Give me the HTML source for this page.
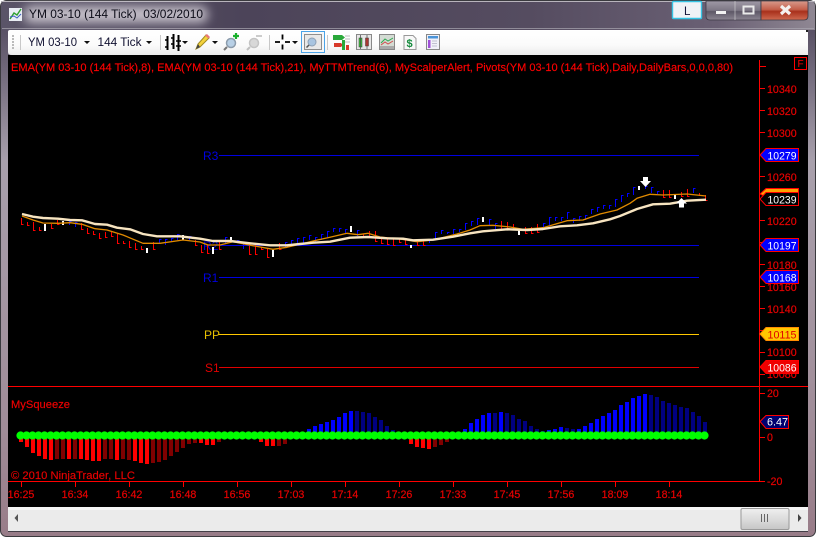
<!DOCTYPE html>
<html><head><meta charset="utf-8"><title>YM 03-10</title>
<style>
html,body{margin:0;padding:0;background:#fff;width:816px;height:539px;overflow:hidden}
svg{display:block;font-family:"Liberation Sans",sans-serif}
.ax{fill:#e60000;stroke:#e60000;stroke-width:.2px;font-size:10.67px}
</style></head><body>
<svg width="816" height="539" viewBox="0 0 816 539" xmlns="http://www.w3.org/2000/svg">
<defs>
<linearGradient id="fr" x1="0" y1="0" x2="0" y2="1"><stop offset="0" stop-color="#4a4357"/><stop offset=".06" stop-color="#5a5266"/><stop offset=".3" stop-color="#a8a0ac"/><stop offset=".8" stop-color="#a08c98"/><stop offset="1" stop-color="#987c88"/></linearGradient>
<linearGradient id="tt" x1="0" y1="0" x2="1" y2="0"><stop offset="0" stop-color="#5a5468"/><stop offset=".3" stop-color="#4c4459"/><stop offset=".65" stop-color="#554c60"/><stop offset=".88" stop-color="#6a6074"/><stop offset="1" stop-color="#8f8793"/></linearGradient>
<linearGradient id="tb" x1="0" y1="0" x2="0" y2="1"><stop offset="0" stop-color="#fff"/><stop offset=".6" stop-color="#fbfbfb"/><stop offset="1" stop-color="#ececec"/></linearGradient>
<linearGradient id="btn" x1="0" y1="0" x2="0" y2="1"><stop offset="0" stop-color="#a09aa6"/><stop offset=".5" stop-color="#7c7684"/><stop offset=".55" stop-color="#5d5766"/><stop offset="1" stop-color="#8b8592"/></linearGradient>
<linearGradient id="cl" x1="0" y1="0" x2="0" y2="1"><stop offset="0" stop-color="#d89a8c"/><stop offset=".45" stop-color="#c45f4a"/><stop offset=".55" stop-color="#a8301c"/><stop offset="1" stop-color="#cf6a50"/></linearGradient>
<linearGradient id="th" x1="0" y1="0" x2="0" y2="1"><stop offset="0" stop-color="#efefef"/><stop offset=".5" stop-color="#dcdcdc"/><stop offset="1" stop-color="#c6c6c6"/></linearGradient>
<filter id="gl" x="-20%" y="-80%" width="140%" height="260%"><feGaussianBlur stdDeviation="5"/></filter>
</defs>

<!-- window frame -->
<rect x="0" y="0" width="816" height="539" fill="#fff"/>
<rect x=".5" y=".5" width="815" height="536" rx="6" fill="url(#fr)" stroke="#3a3a3e"/>
<path d="M1 30V6Q1 1 6 1H810Q815 1 815 6V30Z" fill="url(#tt)"/>
<rect x="1" y="1" width="814" height="1" fill="#b8b4bc"/>
<rect x="2" y="28" width="812" height="1" fill="#aaa6b0" opacity=".7"/>

<!-- title -->
<rect x="24" y="6" width="184" height="17" rx="8" fill="#e8e4ea" opacity=".75" filter="url(#gl)"/>
<rect x="9" y="8" width="13" height="13" fill="#e9edf4"/>
<path d="M10 19L14 13L17 15L21 9" fill="none" stroke="#2fa02f" stroke-width="1.4"/>
<path d="M10 17L14 16L17 18L21 14" fill="none" stroke="#3a5fc0" stroke-width="1"/>
<text x="29" y="18" font-size="12" fill="#0c0c18" textLength="174" lengthAdjust="spacingAndGlyphs" xml:space="preserve">YM 03-10 (144 Tick)  03/02/2010</text>

<!-- window buttons -->
<rect x="672.5" y="1.5" width="29" height="17" rx="1" fill="#f0f2f6" stroke="#36c4e4" stroke-width="1.4"/>
<text x="684" y="15" font-size="11.5" fill="#14143a">L</text>
<path d="M706 1H761V20H710Q706 20 706 16Z" fill="url(#btn)" stroke="#3e3a46" stroke-width=".8"/>
<path d="M761 1H808V16Q808 20 804 20H761Z" fill="url(#cl)" stroke="#3e3a46" stroke-width=".8"/>
<path d="M735 1V20" stroke="#ddd" stroke-width=".8" opacity=".7"/>
<rect x="716" y="11" width="10" height="3" fill="#f2f2f2"/>
<rect x="743.5" y="6.5" width="10" height="7" fill="none" stroke="#eaeaea" stroke-width="2"/>
<path d="M781 6L790 14M790 6L781 14" stroke="#f4f0ee" stroke-width="3.2"/>

<!-- toolbar -->
<path d="M8 32Q8 30 10 30H808V55H12Q8 55 8 52Z" fill="url(#tb)"/>
<rect x="806" y="30" width="2" height="2" fill="#222"/>
<path d="M12 36h2M12 39h2M12 42h2M12 45h2M12 48h2" stroke="#bbb" stroke-width="2"/>
<path d="M20.5 35V50M160.5 35V50M269.5 35V50M327.5 35V50" stroke="#c8c8c8"/>
<text x="28" y="46" font-size="11.5" fill="#101030" textLength="49" lengthAdjust="spacingAndGlyphs">YM 03-10</text>
<text x="97.5" y="46" font-size="11.5" fill="#101030" textLength="44" lengthAdjust="spacingAndGlyphs">144 Tick</text>
<path d="M84 41h6l-3 3zM146 41h6l-3 3zM182 41h6l-3 3zM212 41h6l-3 3zM292 41h6l-3 3z" fill="#111"/>
<!-- style icon -->
<path d="M167.5 36V50M173.5 34V49M178.5 35V51" stroke="#000" stroke-width="2"/>
<path d="M165 40h3M165 47h3M171 38h3M171 44h3M176 41h5M176 46h5" stroke="#000" stroke-width="1.6"/>
<!-- pencil -->
<path d="M196 49L198 44L206 35L209 38L200 47Z" fill="#f4d23c" stroke="#a08a20"/>
<path d="M205 35.5L207 34L210 37L208.5 38.5Z" fill="#e87878"/>
<path d="M196 49L198 44L200 47Z" fill="#444"/>
<!-- zoom in / out -->
<circle cx="231" cy="43" r="4.5" fill="#b8d0e6" stroke="#8c9cac" stroke-width="1.5"/>
<path d="M227 47L224 50" stroke="#777" stroke-width="2"/>
<path d="M233 36h6M236 33v6" stroke="#1ab02c" stroke-width="2.2"/>
<circle cx="254" cy="43" r="4.5" fill="#d8d8d8" stroke="#c4c4c4" stroke-width="1.5"/>
<path d="M250 47L247 50" stroke="#c0c0c0" stroke-width="2"/>
<path d="M256 36h6" stroke="#ccc" stroke-width="2"/>
<!-- crosshair -->
<path d="M275 42h5M285 42h5M282.5 34.5v5M282.5 44.5v5" stroke="#000" stroke-width="1.8"/>
<!-- selected zoom -->
<rect x="301.5" y="31.5" width="23" height="21" fill="#f7f7f7" stroke="#4aa3e8"/>
<rect x="304.5" y="34.5" width="17" height="15" fill="#e8e8e8" stroke="#8e8e8e"/>
<circle cx="312" cy="42" r="4" fill="#a8c4e0" stroke="#8ea0b4"/>
<path d="M309 45L306.5 47.5" stroke="#555" stroke-width="1.5"/>
<!-- chart icons -->
<path d="M333 35h9l3 2.5-3 2.5h-9z" fill="#2aa83a"/>
<path d="M334 43h7l2 2-2 2h-7z" fill="#d8392a"/>
<rect x="342" y="40" width="3" height="10" fill="#2aa83a"/><rect x="346" y="45" width="3" height="5" fill="#d8392a"/>
<path d="M345 36h5M345 39h5M345 42h5" stroke="#bbb"/>
<rect x="356.5" y="34.5" width="15" height="15" fill="#e6e6e6" stroke="#888"/>
<rect x="359" y="38" width="3" height="9" fill="#3cc83c" stroke="#333" stroke-width=".5"/><rect x="365.5" y="38" width="3" height="8" fill="#e03028" stroke="#333" stroke-width=".5"/>
<path d="M360.5 35v14M367 35v14" stroke="#444" stroke-width=".7"/>
<rect x="379.5" y="34.5" width="15" height="15" fill="#d4dcd4" stroke="#888"/>
<path d="M381 43L385 39L388 41L393 38" fill="none" stroke="#30a850"/><path d="M381 45L385 42L388 44L393 41" fill="none" stroke="#d05050"/>
<rect x="380" y="46" width="14" height="3" fill="#aaa"/>
<path d="M404 35.5h9l3 3v11h-12z" fill="#f8f8f8" stroke="#999"/>
<text x="406.5" y="47" font-size="11" font-weight="bold" fill="#148a3c">$</text>
<rect x="426.5" y="34.5" width="13" height="15" fill="#f0f0f8" stroke="#888"/>
<rect x="428" y="36" width="10" height="2.5" fill="#4a94d8"/>
<rect x="428" y="40" width="2.5" height="8" fill="#a050d8"/>
<path d="M432 41h5M432 43.5h5M432 46h5" stroke="#c0c0d0"/>

<!-- chart -->
<rect x="8" y="55" width="800" height="452" fill="#000"/>
<text x="11" y="71" font-size="11" fill="#ff0000" stroke="#ff0000" stroke-width=".15" textLength="722" lengthAdjust="spacingAndGlyphs">EMA(YM 03-10 (144 Tick),8), EMA(YM 03-10 (144 Tick),21), MyTTMTrend(6), MyScalperAlert, Pivots(YM 03-10 (144 Tick),Daily,DailyBars,0,0,0,80)</text>
<rect x="794.5" y="57.5" width="12" height="12" fill="none" stroke="#f00"/>
<text x="797.5" y="67" font-size="10" fill="#f00">F</text>

<!-- pivots -->
<g stroke-width="1">
<path d="M219 155.5H699M219 245.5H699M219 277.5H699" stroke="#0000e0"/>
<path d="M219 334.5H699" stroke="#ffc800"/>
<path d="M219 367.5H699" stroke="#e00000"/>
</g>
<g font-size="12">
<text x="203" y="160" fill="#0000e0">R3</text>
<text x="203" y="250" fill="#0000e0">R2</text>
<text x="203" y="282" fill="#0000e0">R1</text>
<text x="204" y="339" fill="#e8c000">PP</text>
<text x="205" y="372" fill="#e00000">S1</text>
</g>

<!-- price bars -->
<g fill="none" stroke-width="1">
<path stroke="#f00" d="M21.5 218V224.5h2M27.5 222V225.5h2M33.5 222V230.5h2M39.5 227V230.5h2M51.5 224V228.5h2M57.5 220V224.5h2M81.5 223V229.5h2M87.5 228V233.5h2M93.5 231V234.5h2M99.5 233V238.5h2M105.5 232V237.5h2M111.5 232V236.5h2M117.5 234V243.5h2M123.5 241V243.5h2M129.5 241V247.5h2M135.5 243V249.5h2M141.5 246V249.5h2M153.5 242V249.5h2M195.5 240V245.5h2M201.5 245V252.5h2M207.5 245V253.5h2M219.5 242V249.5h2M249.5 246V254.5h2M255.5 245V254.5h2M261.5 247V249.5h2M267.5 248V257.5h2M279.5 243V249.5h2M363.5 234V237.5h2M369.5 231V237.5h2M375.5 231V241.5h2M381.5 239V243.5h2M387.5 239V244.5h2M393.5 239V245.5h2M399.5 239V242.5h2M405.5 240V244.5h2M417.5 242V245.5h2M423.5 240V245.5h2M501.5 221V229.5h2M507.5 222V228.5h2M513.5 224V229.5h2M525.5 227V233.5h2M531.5 227V233.5h2M537.5 224V232.5h2M663.5 190V197.5h2M669.5 190V197.5h2M681.5 192V196.5h2M687.5 189V196.5h2M699.5 193V195.5h2M705.5 195V200.5h2"/>
<path stroke="#00f" d="M69.5 225V221.5h2M75.5 227V222.5h2M159.5 243V239.5h2M165.5 245V239.5h2M171.5 242V238.5h2M177.5 240V234.5h2M189.5 240V236.5h2M225.5 243V237.5h2M237.5 243V240.5h2M243.5 249V242.5h2M285.5 247V242.5h2M291.5 245V240.5h2M297.5 243V238.5h2M303.5 243V237.5h2M309.5 240V235.5h2M315.5 242V237.5h2M321.5 240V234.5h2M327.5 238V231.5h2M333.5 232V228.5h2M339.5 232V228.5h2M345.5 234V229.5h2M357.5 236V230.5h2M429.5 243V240.5h2M435.5 239V232.5h2M441.5 234V230.5h2M447.5 234V232.5h2M453.5 234V229.5h2M459.5 232V229.5h2M465.5 230V223.5h2M471.5 226V221.5h2M477.5 225V218.5h2M489.5 225V219.5h2M495.5 229V223.5h2M543.5 228V223.5h2M549.5 225V217.5h2M555.5 221V217.5h2M561.5 221V217.5h2M567.5 219V212.5h2M573.5 223V218.5h2M579.5 221V216.5h2M585.5 220V215.5h2M591.5 214V209.5h2M597.5 212V207.5h2M603.5 209V205.5h2M609.5 209V205.5h2M615.5 207V199.5h2M621.5 202V195.5h2M627.5 197V193.5h2M633.5 195V187.5h2M645.5 189V186.5h2M651.5 193V187.5h2M657.5 194V191.5h2M693.5 193V188.5h2"/>
<path stroke="#fff" stroke-width="2" d="M45 224V231M63 221V225M147 248V253M183 235V240M213 247V254M231 237V242M273 250V257M351 226V232M411 245V248M483 217V222M519 230V235M639 186V190M675 195V199"/>
</g>

<!-- EMAs -->
<polyline fill="none" stroke="#e08a00" stroke-width="1.3" stroke-linejoin="round" points="22,216 33,220 43,223 58,223.3 70,222.7 82,224.3 95,228.7 107,230 123,235 143,243.3 160,243.3 183,240 200,242 208,245 220,245 233,241.7 253,245.7 273,249.3 287,247.3 300,244.3 313,241 330,237.3 347,233.3 358,234.7 368,233.3 380,237 400,239 417,241.7 433,240 457,234 470,230 480,225.7 493,225.3 510,227 523,229.3 543,227.7 567,220.7 583,220 600,214 617,210 630,203.3 637,198.3 650,194.3 663,195 687,194 706,196"/>
<polyline fill="none" stroke="#f7e4c0" stroke-width="2.4" stroke-linejoin="round" points="22,214 33,216.7 43,218 58,218.7 70,220 82,220.3 95,224 107,224.7 117,227.7 130,229.3 143,234 157,236.3 180,236.3 200,238.7 213,241 230,241 250,243.3 270,245.3 287,245.3 300,244 313,242.7 330,241.7 350,237.7 368,237 387,238.3 403,238.7 413,240.3 433,239.7 453,236.7 470,233.3 483,231.3 507,229.3 527,230 543,229 560,226.3 577,225.3 593,223.3 610,219.3 620,216 637,209 653,204.3 670,203.7 687,200.7 706,199.7"/>

<!-- alert arrows -->
<path d="M643 177h5v4h3l-5.5 6-5.500-6h3z" fill="#fff"/>
<path d="M681.5 198l5.5 5.5h-3v4h-5v-4h-3z" fill="#fff"/>

<!-- axes -->
<g stroke="#f00">
<path d="M8 386.5H808M8 481.5H765M759.5 60V481.5"/>
<path d="M759 66.5h7M759 88.5h6M759 110.5h6M759 132.5h6M759 154.5h6M759 176.5h6M759 198.5h6M759 220.5h6M759 242.5h6M759 264.5h6M759 286.5h6M759 308.5h6M759 330.5h6M759 352.5h6M759 374.5h6M759 393.5h6M759 437.5h6"/>
<path d="M21.5 482V487M75.5 482V487M129.5 482V487M183.5 482V487M237.5 482V487M291.5 482V487M345.5 482V487M399.5 482V487M453.5 482V487M507.5 482V487M561.5 482V487M615.5 482V487M669.5 482V487"/>
</g>
<g class="ax">
<text x="767" y="93">10340</text><text x="767" y="115">10320</text><text x="767" y="137">10300</text><text x="767" y="159">10280</text><text x="767" y="181">10260</text><text x="767" y="203">10240</text><text x="767" y="225">10220</text><text x="767" y="247">10200</text><text x="767" y="269">10180</text><text x="767" y="291">10160</text><text x="767" y="313">10140</text><text x="767" y="335">10120</text><text x="767" y="356">10100</text><text x="767" y="378">10080</text>
<text x="767" y="397">20</text><text x="767" y="441">0</text><text x="767" y="485">-20</text>
</g>

<!-- price tags -->
<g font-size="11" stroke-width="1">
<polygon points="760,194 766,188.5 798.5,188.5 798.5,197 766,197" fill="#ffa000" stroke="#f00"/>
<polygon points="760,155 766,148.5 798.5,148.5 798.5,161.5 766,161.5" fill="#0000ff" stroke="#f00"/>
<text x="767.5" y="159.5" fill="#fff" textLength="29" lengthAdjust="spacingAndGlyphs">10279</text>
<polygon points="760,199 766,192.5 798.5,192.5 798.5,205.5 766,205.5" fill="#000" stroke="#f00"/>
<text x="767.5" y="203.5" fill="#fff" textLength="29" lengthAdjust="spacingAndGlyphs">10239</text>
<polygon points="760,245 766,238.5 798.5,238.5 798.5,251.5 766,251.5" fill="#0000ff" stroke="#f00"/>
<text x="767.5" y="249.5" fill="#fff" textLength="29" lengthAdjust="spacingAndGlyphs">10197</text>
<polygon points="760,277 766,270.5 798.5,270.5 798.5,283.5 766,283.5" fill="#0000ff" stroke="#f00"/>
<text x="767.5" y="281.5" fill="#fff" textLength="29" lengthAdjust="spacingAndGlyphs">10168</text>
<polygon points="760,334 766,327.5 798.5,327.5 798.5,340.5 766,340.5" fill="#ffc800" stroke="#ff8c00"/>
<text x="767.5" y="338.5" fill="#e00000" textLength="29" lengthAdjust="spacingAndGlyphs">10115</text>
<polygon points="760,367 766,360.5 798.5,360.5 798.5,373.5 766,373.5" fill="#f00000" stroke="#f00"/>
<text x="767.5" y="371.5" fill="#fff" textLength="29" lengthAdjust="spacingAndGlyphs">10086</text>
<polygon points="760,421.5 766,415.5 788.5,415.5 788.5,428.5 766,428.5" fill="#000070" stroke="#f00"/>
<text x="767" y="425.5" fill="#fff" textLength="21" lengthAdjust="spacingAndGlyphs">6.47</text>
</g>

<!-- squeeze histogram -->
<g fill="none" stroke-width="4">
<path stroke="#ff0000" d="M21 436V442M27 436V447M33 436V453M39 436V456M45 436V459M51 436V460M69 436V459M81 436V459M87 436V460M93 436V461M99 436V461M117 436V460M135 436V461M141 436V463M147 436V464M201 436V443M207 436V445M213 436V445M261 436V442M267 436V446M273 436V446M411 436V444M417 436V447M423 436V448M429 436V449"/>
<path stroke="#800000" d="M57 436V459M63 436V459M75 436V459M105 436V459M111 436V459M123 436V459M129 436V460M153 436V463M159 436V462M165 436V460M171 436V456M177 436V452M183 436V448M189 436V444M195 436V443M219 436V442M279 436V446M285 436V444M435 436V447M441 436V445M447 436V442"/>
<path stroke="#0000ff" d="M309 436V429M315 436V426M321 436V424M327 436V422M333 436V420M339 436V417M345 436V413M351 436V411M465 436V429M471 436V423M477 436V419M483 436V415M489 436V413M501 436V412M549 436V430M555 436V429M561 436V427M579 436V429M585 436V426M591 436V423M597 436V419M603 436V416M609 436V413M615 436V410M621 436V405M627 436V402M633 436V398M639 436V396M645 436V394"/>
<path stroke="#000080" d="M357 436V411M363 436V412M369 436V413M375 436V417M381 436V420M387 436V426M393 436V430M495 436V413M507 436V413M513 436V415M519 436V419M525 436V421M531 436V426M537 436V429M543 436V431M567 436V428M573 436V429M651 436V395M657 436V397M663 436V401M669 436V403M675 436V405M681 436V407M687 436V408M693 436V412M699 436V416M705 436V422"/>
</g>
<path d="M20.5 435.5H705" fill="none" stroke="#00ff00" stroke-width="8.2" stroke-linecap="round" stroke-dasharray="0 6"/>

<text x="11" y="408" font-size="11" fill="#f00000" stroke="#f00000" stroke-width=".15" textLength="59" lengthAdjust="spacingAndGlyphs">MySqueeze</text>
<text x="11" y="479" font-size="11" fill="#e80000" stroke="#e80000" stroke-width=".15" textLength="124" lengthAdjust="spacingAndGlyphs">© 2010 NinjaTrader, LLC</text>

<!-- time labels -->
<g class="ax" text-anchor="middle">
<text x="21" y="498">16:25</text><text x="75" y="498">16:34</text><text x="129" y="498">16:42</text><text x="183" y="498">16:48</text><text x="237" y="498">16:56</text><text x="291" y="498">17:03</text><text x="345" y="498">17:14</text><text x="399" y="498">17:26</text><text x="453" y="498">17:33</text><text x="507" y="498">17:45</text><text x="561" y="498">17:56</text><text x="615" y="498">18:09</text><text x="669" y="498">18:14</text>
</g>

<!-- scrollbar -->
<rect x="8" y="507" width="800" height="24" fill="#ebebeb"/>
<rect x="8" y="507" width="800" height="3" fill="#f6f6f6"/>
<rect x="8" y="531" width="800" height="1" fill="#444048"/>
<path d="M18 514v8l-3.5-4z" fill="#555"/>
<rect x="741" y="508.5" width="48" height="21" rx="1.5" fill="url(#th)" stroke="#9a9a9a"/>
<path d="M761.5 514v8M764.5 514v8M767.5 514v8" stroke="#666"/>
<path d="M798 514v8l3.5-4z" fill="#444"/>
</svg>
</body></html>
